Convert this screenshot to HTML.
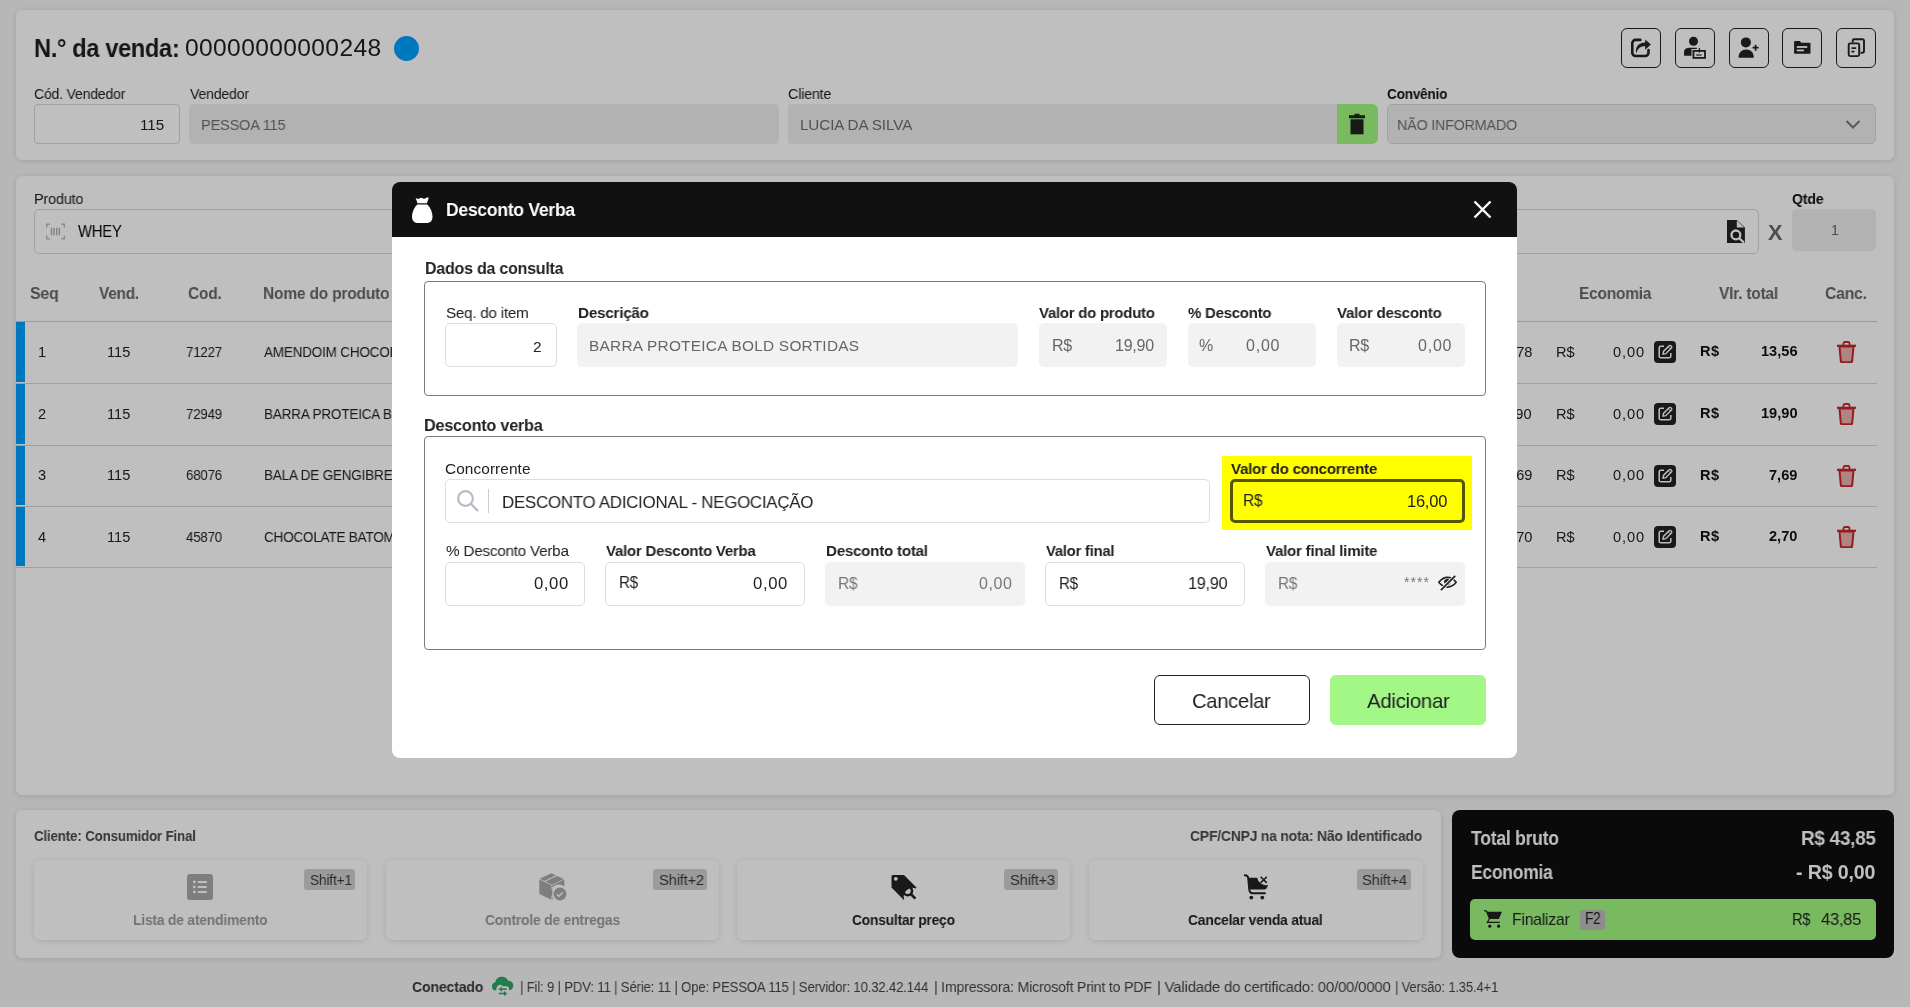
<!DOCTYPE html>
<html><head><meta charset="utf-8"><style>
html,body{margin:0;padding:0;}
body{width:1910px;height:1007px;position:relative;overflow:hidden;background:#f5f5f5;font-family:"Liberation Sans", sans-serif;}
.t{position:absolute;white-space:pre;will-change:transform;}
.r{position:absolute;box-sizing:border-box;}
</style></head><body>
<div class="r" style="left:16px;top:10px;width:1878px;height:150px;background:#fff;border-radius:6px;box-shadow:0 1px 6px rgba(0,0,0,.13)"></div>
<div class="t" style="left:34.00px;top:34.99px;font-size:26px;line-height:26px;font-weight:700;color:#1e1e1e;letter-spacing:-0.390px;transform:scaleX(0.9088);transform-origin:0 0;">N.° da venda:</div>
<div class="t" style="left:185.30px;top:36.48px;font-size:24.6px;line-height:24.6px;color:#1e1e1e;letter-spacing:0.358px;">00000000000248</div>
<div class="r" style="left:394px;top:36px;width:25px;height:25px;background:#00a0ff;border-radius:50%"></div>
<div class="t" style="left:34.20px;top:86.86px;font-size:14.7px;line-height:14.7px;color:#222;letter-spacing:-0.220px;transform:scaleX(0.9586);transform-origin:0 0;">Cód. Vendedor</div>
<div class="t" style="left:189.70px;top:86.86px;font-size:14.7px;line-height:14.7px;color:#222;letter-spacing:-0.220px;transform:scaleX(0.9624);transform-origin:0 0;">Vendedor</div>
<div class="t" style="left:788.40px;top:86.86px;font-size:14.7px;line-height:14.7px;color:#222;letter-spacing:-0.220px;transform:scaleX(0.9769);transform-origin:0 0;">Cliente</div>
<div class="t" style="left:1387.20px;top:86.86px;font-size:14.7px;line-height:14.7px;font-weight:700;color:#111;letter-spacing:-0.220px;transform:scaleX(0.9235);transform-origin:0 0;">Convênio</div>
<div class="r" style="left:34px;top:104px;width:146px;height:40px;background:#fff;border:1px solid #d6d6d6;border-radius:4px"></div>
<div class="t" style="left:140.35px;top:117.13px;font-size:15.2px;line-height:15.2px;color:#222;">115</div>
<div class="r" style="left:189px;top:104px;width:590px;height:40px;background:#eeeeee;border-radius:4px"></div>
<div class="t" style="left:201.30px;top:117.13px;font-size:15.2px;line-height:15.2px;color:#6e6e6e;letter-spacing:-0.228px;transform:scaleX(0.9614);transform-origin:0 0;">PESSOA 115</div>
<div class="r" style="left:788px;top:104px;width:549px;height:40px;background:#eeeeee;border-radius:4px 0 0 4px"></div>
<div class="t" style="left:800.40px;top:117.13px;font-size:15.2px;line-height:15.2px;color:#6e6e6e;letter-spacing:-0.085px;">LUCIA DA SILVA</div>
<div class="r" style="left:1337px;top:104px;width:41px;height:40px;background:#a2f882;border-radius:0 6px 6px 0"></div>
<svg class="r" style="left:1347px;top:112px;" width="20" height="24" viewBox="0 0 20 24"><path d="M7.5 1.8h5v1.5h5.5v2.9H2V3.3h5.5z" fill="#222"/><rect x="3.5" y="7.3" width="13" height="15" fill="#222"/></svg>
<div class="r" style="left:1387px;top:104px;width:489px;height:40px;background:#eeeeee;border:1px solid #d8d8d8;border-radius:5px"></div>
<div class="t" style="left:1396.50px;top:117.13px;font-size:15.2px;line-height:15.2px;color:#6e6e6e;letter-spacing:-0.228px;transform:scaleX(0.9441);transform-origin:0 0;">NÃO INFORMADO</div>
<svg class="r" style="left:1845px;top:119px;" width="16" height="11" viewBox="0 0 16 11"><path d="M1.5 2l6.5 6.5L14.5 2" fill="none" stroke="#777" stroke-width="2"/></svg>
<div class="r" style="left:1621px;top:28px;width:40px;height:40px;border:1.6px solid #222;border-radius:6px"></div>
<div class="r" style="left:1675px;top:28px;width:40px;height:40px;border:1.6px solid #222;border-radius:6px"></div>
<div class="r" style="left:1729px;top:28px;width:40px;height:40px;border:1.6px solid #222;border-radius:6px"></div>
<div class="r" style="left:1782px;top:28px;width:40px;height:40px;border:1.6px solid #222;border-radius:6px"></div>
<div class="r" style="left:1836px;top:28px;width:40px;height:40px;border:1.6px solid #222;border-radius:6px"></div>
<svg class="r" style="left:1621px;top:28px;" width="40" height="40" viewBox="0 0 40 40"><path d="M19.3 11.9H14.6a3.3 3.3 0 0 0-3.3 3.3v9.5a3.3 3.3 0 0 0 3.3 3.3h9.6a3.3 3.3 0 0 0 3.3-3.3V22" fill="none" stroke="#222" stroke-width="2.6" stroke-linecap="round"/><path d="M15.2 25.6C14 19.5 17 14.8 24.2 14.5V11.5L29.9 16.6 24.2 21.7V18.3C19.5 18.1 16.5 20.6 15.2 25.6z" fill="#222"/></svg>
<svg class="r" style="left:1675px;top:28px;" width="40" height="40" viewBox="0 0 40 40"><circle cx="18.5" cy="13.3" r="4.5" fill="#222"/><path d="M9.1 27.8V23.5C9.1 21 11.5 19.7 15 19.7H21.8V21H16.5V27.8z" fill="#222"/><rect x="18.4" y="22.9" width="11.6" height="7" fill="none" stroke="#222" stroke-width="1.8"/><path d="M21.2 27h5.4" stroke="#222" stroke-width="1.2"/><path d="M24.4 20v4.6" stroke="#222" stroke-width="1.3"/></svg>
<svg class="r" style="left:1729px;top:28px;" width="40" height="40" viewBox="0 0 40 40"><circle cx="16.9" cy="14.4" r="5" fill="#222"/><path d="M9.6 29.7C9.6 24.6 12.6 21.6 17.2 21.6S24.8 24.6 24.8 29.7z" fill="#222"/><path d="M26.6 16.7v6M23.6 19.7h6" stroke="#222" stroke-width="1.7"/></svg>
<svg class="r" style="left:1782px;top:28px;" width="40" height="40" viewBox="0 0 40 40"><path d="M12.1 13.8a.8.8 0 0 1 .8-.8h4.9l1.6 1.8h8.3a.8.8 0 0 1 .8.8V25a.8.8 0 0 1-.8.8H12.9a.8.8 0 0 1-.8-.8z" fill="#222"/><rect x="14.8" y="18.1" width="10.5" height="1.8" fill="#fff"/><rect x="14.8" y="21.5" width="7.1" height="1.8" fill="#fff"/></svg>
<svg class="r" style="left:1836px;top:28px;" width="40" height="40" viewBox="0 0 40 40"><path d="M16.7 14.5v-1.7a1.5 1.5 0 0 1 1.5-1.5h8.3a1.5 1.5 0 0 1 1.5 1.5v10.5a1.5 1.5 0 0 1-1.5 1.5h-1.9" fill="none" stroke="#222" stroke-width="1.9"/><rect x="12.7" y="15.4" width="10.5" height="12.7" rx="1.5" fill="none" stroke="#222" stroke-width="1.9"/><rect x="15.3" y="19.2" width="5.1" height="1.7" rx=".8" fill="#222"/><rect x="15.3" y="22.8" width="3.2" height="1.7" rx=".8" fill="#222"/></svg>
<div class="r" style="left:16px;top:176px;width:1878px;height:619px;background:#fff;border-radius:6px;box-shadow:0 1px 6px rgba(0,0,0,.13)"></div>
<div class="t" style="left:34.20px;top:191.56px;font-size:14.7px;line-height:14.7px;color:#222;letter-spacing:-0.220px;transform:scaleX(0.9865);transform-origin:0 0;">Produto</div>
<div class="r" style="left:34px;top:209px;width:1725px;height:45px;background:#fff;border:1px solid #d6d6d6;border-radius:5px"></div>
<svg class="r" style="left:45px;top:223px;" width="21" height="17" viewBox="0 0 21 18"><path d="M4.5 1.2H1.2v3.6M16.5 1.2h3.3v3.6M1.2 13.2v3.6h3.3M19.8 13.2v3.6h-3.3" fill="none" stroke="#a9b0b8" stroke-width="1.3"/><path d="M6.3 5v8M9 5v8M11.8 5v8M14.6 5v8" stroke="#a9b0b8" stroke-width="1.5"/></svg>
<div class="t" style="left:77.50px;top:223.99px;font-size:15.6px;line-height:15.6px;color:#000;letter-spacing:-0.234px;transform:scaleX(0.9501);transform-origin:0 0;">WHEY</div>
<svg class="r" style="left:1726px;top:219px;" width="20" height="25" viewBox="0 0 20 25"><path d="M1 1h9.8L18.9 8.4V24H1z" fill="#222"/><path d="M10.8 1.6v6.9h7.4z" fill="#fff"/><circle cx="9.9" cy="15.9" r="4.4" fill="none" stroke="#fff" stroke-width="2.3"/><path d="M13 19l5 4.6" stroke="#fff" stroke-width="2.3"/></svg>
<div class="t" style="left:1768.20px;top:222.43px;font-size:21.7px;line-height:21.7px;font-weight:700;color:#6a6a6a;">X</div>
<div class="t" style="left:1791.50px;top:191.56px;font-size:14.7px;line-height:14.7px;font-weight:700;color:#111;letter-spacing:-0.220px;transform:scaleX(0.9592);transform-origin:0 0;">Qtde</div>
<div class="r" style="left:1792px;top:209px;width:84px;height:42px;background:#eeeeee;border-radius:5px"></div>
<div class="t" style="left:1831.05px;top:223.48px;font-size:14.2px;line-height:14.2px;color:#666;">1</div>
<div class="t" style="left:30.20px;top:285.01px;font-size:17px;line-height:17px;font-weight:700;color:#666;letter-spacing:-0.255px;transform:scaleX(0.9384);transform-origin:0 0;">Seq</div>
<div class="t" style="left:98.80px;top:285.01px;font-size:17px;line-height:17px;font-weight:700;color:#666;letter-spacing:-0.255px;transform:scaleX(0.9068);transform-origin:0 0;">Vend.</div>
<div class="t" style="left:187.50px;top:285.01px;font-size:17px;line-height:17px;font-weight:700;color:#666;letter-spacing:-0.255px;transform:scaleX(0.9112);transform-origin:0 0;">Cod.</div>
<div class="t" style="left:263.00px;top:285.01px;font-size:17px;line-height:17px;font-weight:700;color:#666;letter-spacing:-0.255px;transform:scaleX(0.9161);transform-origin:0 0;">Nome do produto</div>
<div class="t" style="left:1579.40px;top:285.01px;font-size:17px;line-height:17px;font-weight:700;color:#666;letter-spacing:-0.255px;transform:scaleX(0.9119);transform-origin:0 0;">Economia</div>
<div class="t" style="left:1719.00px;top:285.01px;font-size:17px;line-height:17px;font-weight:700;color:#666;letter-spacing:-0.255px;transform:scaleX(0.9142);transform-origin:0 0;">Vlr. total</div>
<div class="t" style="left:1825.00px;top:285.01px;font-size:17px;line-height:17px;font-weight:700;color:#666;letter-spacing:-0.255px;transform:scaleX(0.9276);transform-origin:0 0;">Canc.</div>
<div class="r" style="left:16px;top:321px;width:1861px;height:1px;background:#cfcfcf"></div>
<div class="r" style="left:16px;top:322px;width:9px;height:60px;background:#00a0ff"></div>
<div class="r" style="left:16px;top:383px;width:1861px;height:1px;background:#d4d4d4"></div>
<div class="t" style="left:37.75px;top:344.84px;font-size:14.6px;line-height:14.6px;color:#222;">1</div>
<div class="t" style="left:107.35px;top:344.84px;font-size:14.6px;line-height:14.6px;color:#222;">115</div>
<div class="t" style="left:186.40px;top:344.84px;font-size:14.6px;line-height:14.6px;color:#222;letter-spacing:-0.219px;transform:scaleX(0.9113);transform-origin:0 0;">71227</div>
<div class="t" style="left:263.60px;top:344.84px;font-size:14.6px;line-height:14.6px;color:#222;letter-spacing:-0.219px;transform:scaleX(0.9263);transform-origin:0 0;">AMENDOIM CHOCOLATE</div>
<div class="t" style="left:1503.60px;top:344.84px;font-size:14.6px;line-height:14.6px;color:#222;">6,78</div>
<div class="t" style="left:1555.50px;top:344.84px;font-size:14.6px;line-height:14.6px;color:#222;letter-spacing:-0.150px;">R$</div>
<div class="t" style="left:1612.80px;top:344.84px;font-size:14.6px;line-height:14.6px;color:#222;letter-spacing:0.867px;">0,00</div>
<div class="r" style="left:1654px;top:341px;width:22px;height:22px;background:#222;border-radius:4px"></div>
<svg class="r" style="left:1654px;top:341px;" width="22" height="22" viewBox="0 0 22 22"><path d="M10 5.2H6.8A1.6 1.6 0 0 0 5.2 6.8v8.4a1.6 1.6 0 0 0 1.6 1.6h8.4a1.6 1.6 0 0 0 1.6-1.6V12" fill="none" stroke="#fff" stroke-width="1.5"/><path d="M9 13.2l.5-2.8 5.6-5.6a1.3 1.3 0 0 1 1.9 0l.4.4a1.3 1.3 0 0 1 0 1.9L11.8 12.7z" fill="none" stroke="#fff" stroke-width="1.4"/><path d="M14.3 5.8l2.1 2.1" stroke="#fff" stroke-width="1"/></svg>
<div class="t" style="left:1699.90px;top:344.14px;font-size:14.6px;line-height:14.6px;font-weight:700;color:#111;letter-spacing:0.350px;">R$</div>
<div class="t" style="left:1760.65px;top:344.14px;font-size:14.6px;line-height:14.6px;font-weight:700;color:#111;">13,56</div>
<svg class="r" style="left:1836px;top:341px;" width="21" height="22" viewBox="0 0 21 22"><path d="M3.5 5.5h14l-1.3 14.5a1.5 1.5 0 0 1-1.5 1.3H6.3a1.5 1.5 0 0 1-1.5-1.3z" fill="#e8b0b0" stroke="#c62828" stroke-width="2"/><path d="M1 4.8h19" stroke="#c62828" stroke-width="2.2"/><path d="M7.5 4.5V2.5a1.5 1.5 0 0 1 1.5-1.5h3a1.5 1.5 0 0 1 1.5 1.5v2" fill="none" stroke="#c62828" stroke-width="1.8"/></svg>
<div class="r" style="left:16px;top:384px;width:9px;height:60px;background:#00a0ff"></div>
<div class="r" style="left:16px;top:445px;width:1861px;height:1px;background:#d4d4d4"></div>
<div class="t" style="left:37.75px;top:406.54px;font-size:14.6px;line-height:14.6px;color:#222;">2</div>
<div class="t" style="left:107.35px;top:406.54px;font-size:14.6px;line-height:14.6px;color:#222;">115</div>
<div class="t" style="left:186.40px;top:406.54px;font-size:14.6px;line-height:14.6px;color:#222;letter-spacing:-0.219px;transform:scaleX(0.9113);transform-origin:0 0;">72949</div>
<div class="t" style="left:263.60px;top:406.54px;font-size:14.6px;line-height:14.6px;color:#222;letter-spacing:-0.219px;transform:scaleX(0.9285);transform-origin:0 0;">BARRA PROTEICA BOLD SORTIDAS</div>
<div class="t" style="left:1495.45px;top:406.54px;font-size:14.6px;line-height:14.6px;color:#222;">19,90</div>
<div class="t" style="left:1555.50px;top:406.54px;font-size:14.6px;line-height:14.6px;color:#222;letter-spacing:-0.150px;">R$</div>
<div class="t" style="left:1612.80px;top:406.54px;font-size:14.6px;line-height:14.6px;color:#222;letter-spacing:0.867px;">0,00</div>
<div class="r" style="left:1654px;top:403px;width:22px;height:22px;background:#222;border-radius:4px"></div>
<svg class="r" style="left:1654px;top:403px;" width="22" height="22" viewBox="0 0 22 22"><path d="M10 5.2H6.8A1.6 1.6 0 0 0 5.2 6.8v8.4a1.6 1.6 0 0 0 1.6 1.6h8.4a1.6 1.6 0 0 0 1.6-1.6V12" fill="none" stroke="#fff" stroke-width="1.5"/><path d="M9 13.2l.5-2.8 5.6-5.6a1.3 1.3 0 0 1 1.9 0l.4.4a1.3 1.3 0 0 1 0 1.9L11.8 12.7z" fill="none" stroke="#fff" stroke-width="1.4"/><path d="M14.3 5.8l2.1 2.1" stroke="#fff" stroke-width="1"/></svg>
<div class="t" style="left:1699.90px;top:405.84px;font-size:14.6px;line-height:14.6px;font-weight:700;color:#111;letter-spacing:0.350px;">R$</div>
<div class="t" style="left:1760.65px;top:405.84px;font-size:14.6px;line-height:14.6px;font-weight:700;color:#111;">19,90</div>
<svg class="r" style="left:1836px;top:403px;" width="21" height="22" viewBox="0 0 21 22"><path d="M3.5 5.5h14l-1.3 14.5a1.5 1.5 0 0 1-1.5 1.3H6.3a1.5 1.5 0 0 1-1.5-1.3z" fill="#e8b0b0" stroke="#c62828" stroke-width="2"/><path d="M1 4.8h19" stroke="#c62828" stroke-width="2.2"/><path d="M7.5 4.5V2.5a1.5 1.5 0 0 1 1.5-1.5h3a1.5 1.5 0 0 1 1.5 1.5v2" fill="none" stroke="#c62828" stroke-width="1.8"/></svg>
<div class="r" style="left:16px;top:446px;width:9px;height:59px;background:#00a0ff"></div>
<div class="r" style="left:16px;top:506px;width:1861px;height:1px;background:#d4d4d4"></div>
<div class="t" style="left:37.75px;top:468.24px;font-size:14.6px;line-height:14.6px;color:#222;">3</div>
<div class="t" style="left:107.35px;top:468.24px;font-size:14.6px;line-height:14.6px;color:#222;">115</div>
<div class="t" style="left:186.40px;top:468.24px;font-size:14.6px;line-height:14.6px;color:#222;letter-spacing:-0.219px;transform:scaleX(0.9113);transform-origin:0 0;">68076</div>
<div class="t" style="left:263.60px;top:468.24px;font-size:14.6px;line-height:14.6px;color:#222;letter-spacing:-0.219px;transform:scaleX(0.9280);transform-origin:0 0;">BALA DE GENGIBRE</div>
<div class="t" style="left:1503.60px;top:468.24px;font-size:14.6px;line-height:14.6px;color:#222;">7,69</div>
<div class="t" style="left:1555.50px;top:468.24px;font-size:14.6px;line-height:14.6px;color:#222;letter-spacing:-0.150px;">R$</div>
<div class="t" style="left:1612.80px;top:468.24px;font-size:14.6px;line-height:14.6px;color:#222;letter-spacing:0.867px;">0,00</div>
<div class="r" style="left:1654px;top:465px;width:22px;height:22px;background:#222;border-radius:4px"></div>
<svg class="r" style="left:1654px;top:465px;" width="22" height="22" viewBox="0 0 22 22"><path d="M10 5.2H6.8A1.6 1.6 0 0 0 5.2 6.8v8.4a1.6 1.6 0 0 0 1.6 1.6h8.4a1.6 1.6 0 0 0 1.6-1.6V12" fill="none" stroke="#fff" stroke-width="1.5"/><path d="M9 13.2l.5-2.8 5.6-5.6a1.3 1.3 0 0 1 1.9 0l.4.4a1.3 1.3 0 0 1 0 1.9L11.8 12.7z" fill="none" stroke="#fff" stroke-width="1.4"/><path d="M14.3 5.8l2.1 2.1" stroke="#fff" stroke-width="1"/></svg>
<div class="t" style="left:1699.90px;top:467.54px;font-size:14.6px;line-height:14.6px;font-weight:700;color:#111;letter-spacing:0.350px;">R$</div>
<div class="t" style="left:1768.80px;top:467.54px;font-size:14.6px;line-height:14.6px;font-weight:700;color:#111;">7,69</div>
<svg class="r" style="left:1836px;top:465px;" width="21" height="22" viewBox="0 0 21 22"><path d="M3.5 5.5h14l-1.3 14.5a1.5 1.5 0 0 1-1.5 1.3H6.3a1.5 1.5 0 0 1-1.5-1.3z" fill="#e8b0b0" stroke="#c62828" stroke-width="2"/><path d="M1 4.8h19" stroke="#c62828" stroke-width="2.2"/><path d="M7.5 4.5V2.5a1.5 1.5 0 0 1 1.5-1.5h3a1.5 1.5 0 0 1 1.5 1.5v2" fill="none" stroke="#c62828" stroke-width="1.8"/></svg>
<div class="r" style="left:16px;top:507px;width:9px;height:59px;background:#00a0ff"></div>
<div class="r" style="left:16px;top:567px;width:1861px;height:1px;background:#d4d4d4"></div>
<div class="t" style="left:37.75px;top:529.94px;font-size:14.6px;line-height:14.6px;color:#222;">4</div>
<div class="t" style="left:107.35px;top:529.94px;font-size:14.6px;line-height:14.6px;color:#222;">115</div>
<div class="t" style="left:186.40px;top:529.94px;font-size:14.6px;line-height:14.6px;color:#222;letter-spacing:-0.219px;transform:scaleX(0.9113);transform-origin:0 0;">45870</div>
<div class="t" style="left:263.60px;top:529.94px;font-size:14.6px;line-height:14.6px;color:#222;letter-spacing:-0.219px;transform:scaleX(0.9262);transform-origin:0 0;">CHOCOLATE BATOM</div>
<div class="t" style="left:1503.60px;top:529.94px;font-size:14.6px;line-height:14.6px;color:#222;">2,70</div>
<div class="t" style="left:1555.50px;top:529.94px;font-size:14.6px;line-height:14.6px;color:#222;letter-spacing:-0.150px;">R$</div>
<div class="t" style="left:1612.80px;top:529.94px;font-size:14.6px;line-height:14.6px;color:#222;letter-spacing:0.867px;">0,00</div>
<div class="r" style="left:1654px;top:526px;width:22px;height:22px;background:#222;border-radius:4px"></div>
<svg class="r" style="left:1654px;top:526px;" width="22" height="22" viewBox="0 0 22 22"><path d="M10 5.2H6.8A1.6 1.6 0 0 0 5.2 6.8v8.4a1.6 1.6 0 0 0 1.6 1.6h8.4a1.6 1.6 0 0 0 1.6-1.6V12" fill="none" stroke="#fff" stroke-width="1.5"/><path d="M9 13.2l.5-2.8 5.6-5.6a1.3 1.3 0 0 1 1.9 0l.4.4a1.3 1.3 0 0 1 0 1.9L11.8 12.7z" fill="none" stroke="#fff" stroke-width="1.4"/><path d="M14.3 5.8l2.1 2.1" stroke="#fff" stroke-width="1"/></svg>
<div class="t" style="left:1699.90px;top:529.24px;font-size:14.6px;line-height:14.6px;font-weight:700;color:#111;letter-spacing:0.350px;">R$</div>
<div class="t" style="left:1768.80px;top:529.24px;font-size:14.6px;line-height:14.6px;font-weight:700;color:#111;">2,70</div>
<svg class="r" style="left:1836px;top:526px;" width="21" height="22" viewBox="0 0 21 22"><path d="M3.5 5.5h14l-1.3 14.5a1.5 1.5 0 0 1-1.5 1.3H6.3a1.5 1.5 0 0 1-1.5-1.3z" fill="#e8b0b0" stroke="#c62828" stroke-width="2"/><path d="M1 4.8h19" stroke="#c62828" stroke-width="2.2"/><path d="M7.5 4.5V2.5a1.5 1.5 0 0 1 1.5-1.5h3a1.5 1.5 0 0 1 1.5 1.5v2" fill="none" stroke="#c62828" stroke-width="1.8"/></svg>
<div class="r" style="left:16px;top:810px;width:1424.6px;height:148px;background:#fff;border-radius:6px;box-shadow:0 1px 6px rgba(0,0,0,.13)"></div>
<div class="t" style="left:34.00px;top:828.30px;font-size:15px;line-height:15px;font-weight:700;color:#4a4a4a;letter-spacing:-0.225px;transform:scaleX(0.8938);transform-origin:0 0;">Cliente: Consumidor Final</div>
<div class="t" style="left:1190.30px;top:828.30px;font-size:15px;line-height:15px;font-weight:700;color:#4a4a4a;letter-spacing:-0.225px;transform:scaleX(0.9285);transform-origin:0 0;">CPF/CNPJ na nota: Não Identificado</div>
<div class="r" style="left:34px;top:860px;width:333px;height:80px;background:#fff;border-radius:6px;box-shadow:0 1px 6px rgba(0,0,0,.12)"></div>
<div class="t" style="left:133.20px;top:912.30px;font-size:15px;line-height:15px;font-weight:700;color:#9a9a9a;letter-spacing:-0.225px;transform:scaleX(0.9243);transform-origin:0 0;">Lista de atendimento</div>
<div class="r" style="left:304.2px;top:869px;width:51px;height:21px;background:#cfcfcf;border-radius:3px"></div>
<div class="t" style="left:309.50px;top:872.30px;font-size:15px;line-height:15px;color:#3a3a3a;letter-spacing:-0.225px;transform:scaleX(0.9180);transform-origin:0 0;">Shift+1</div>
<div class="r" style="left:386px;top:860px;width:333px;height:80px;background:#fff;border-radius:6px;box-shadow:0 1px 6px rgba(0,0,0,.12)"></div>
<div class="t" style="left:484.60px;top:912.30px;font-size:15px;line-height:15px;font-weight:700;color:#9a9a9a;letter-spacing:-0.225px;transform:scaleX(0.9275);transform-origin:0 0;">Controle de entregas</div>
<div class="r" style="left:653.2px;top:869px;width:54px;height:21px;background:#cfcfcf;border-radius:3px"></div>
<div class="t" style="left:658.50px;top:872.30px;font-size:15px;line-height:15px;color:#3a3a3a;letter-spacing:-0.225px;transform:scaleX(0.9836);transform-origin:0 0;">Shift+2</div>
<div class="r" style="left:737px;top:860px;width:333px;height:80px;background:#fff;border-radius:6px;box-shadow:0 1px 6px rgba(0,0,0,.12)"></div>
<div class="t" style="left:852.00px;top:912.30px;font-size:15px;line-height:15px;font-weight:700;color:#222;letter-spacing:-0.225px;transform:scaleX(0.9209);transform-origin:0 0;">Consultar preço</div>
<div class="r" style="left:1004.2px;top:869px;width:54px;height:21px;background:#cfcfcf;border-radius:3px"></div>
<div class="t" style="left:1009.50px;top:872.30px;font-size:15px;line-height:15px;color:#3a3a3a;letter-spacing:-0.225px;transform:scaleX(0.9836);transform-origin:0 0;">Shift+3</div>
<div class="r" style="left:1089px;top:860px;width:333.5px;height:80px;background:#fff;border-radius:6px;box-shadow:0 1px 6px rgba(0,0,0,.12)"></div>
<div class="t" style="left:1188.20px;top:912.30px;font-size:15px;line-height:15px;font-weight:700;color:#222;letter-spacing:-0.225px;transform:scaleX(0.9247);transform-origin:0 0;">Cancelar venda atual</div>
<div class="r" style="left:1356.7px;top:869px;width:54px;height:21px;background:#cfcfcf;border-radius:3px"></div>
<div class="t" style="left:1362.00px;top:872.30px;font-size:15px;line-height:15px;color:#3a3a3a;letter-spacing:-0.225px;transform:scaleX(0.9836);transform-origin:0 0;">Shift+4</div>
<svg class="r" style="left:187px;top:874px;" width="26" height="26" viewBox="0 0 26 26"><rect x="0" y="0" width="26" height="26" rx="3" fill="#a8a8a8"/><circle cx="7.3" cy="8" r="1.4" fill="#fff"/><circle cx="7.3" cy="13" r="1.4" fill="#fff"/><circle cx="7.3" cy="18" r="1.4" fill="#fff"/><rect x="10.5" y="7" width="9.5" height="2" rx="1" fill="#fff"/><rect x="10.5" y="12" width="9.5" height="2" rx="1" fill="#fff"/><rect x="10.5" y="17" width="9.5" height="2" rx="1" fill="#fff"/></svg>
<svg class="r" style="left:538.5px;top:872.5px;" width="28" height="28" viewBox="0 0 28 28"><path d="M0.3 6.5L12.5 12.3V26.8L0.3 21z" fill="#a8a8a8"/><path d="M13.3 12.3L25.3 6.5V13.5A7.5 7.5 0 0 0 14.5 25.8L13.3 26.6z" fill="#a8a8a8"/><path d="M0.8 5.8L12.5 0.3 16.8 2.3 5.2 7.9z" fill="#a8a8a8"/><path d="M6.4 8.5L18 2.9 24.8 6.1 12.9 11.7z" fill="#a8a8a8"/><circle cx="21" cy="21" r="6.4" fill="#a8a8a8"/><path d="M17.9 21.2l2.1 2.1 4-4" fill="none" stroke="#fff" stroke-width="1.5"/></svg>
<svg class="r" style="left:891px;top:874px;" width="27" height="27" viewBox="0 0 27 27"><path d="M0.5 2.5a1.5 1.5 0 0 1 1.5-1.5H13L25.5 13.5 24.6 14.4A9 9 0 0 0 13.2 25.8L12.9 26 0.5 13.6z" fill="#222"/><circle cx="4.8" cy="4.8" r="1.9" fill="#fff"/><circle cx="16.7" cy="16.9" r="4.3" fill="none" stroke="#222" stroke-width="2.6"/><path d="M19.8 20l4.6 4.6" stroke="#222" stroke-width="2.6"/></svg>
<svg class="r" style="left:1243.5px;top:874.3px;" width="25" height="26" viewBox="0 0 25 26"><path d="M0.5 1.2C2.5 1.2 3.9 2 4.1 3.5L5.3 15.8C5.5 18 6.8 19.2 8.9 19.2H21" fill="none" stroke="#222" stroke-width="1.9" stroke-linecap="round"/><path d="M4.2 3.8H13.1A9 9 0 0 0 24.2 10.9L22.7 14C22.2 15 21.5 15.4 20.5 15.4H5.8z" fill="#222"/><circle cx="7.3" cy="23.6" r="1.9" fill="#222"/><circle cx="18.3" cy="23.6" r="1.9" fill="#222"/><path d="M16.6 2.7l6.2 6.2M22.8 2.7l-6.2 6.2" stroke="#222" stroke-width="1.5"/></svg>
<div class="r" style="left:1452px;top:810px;width:442px;height:148px;background:#0e0e0e;border-radius:8px"></div>
<div class="t" style="left:1470.80px;top:828.91px;font-size:19.6px;line-height:19.6px;font-weight:700;color:#fff;letter-spacing:-0.294px;transform:scaleX(0.8983);transform-origin:0 0;">Total bruto</div>
<div class="t" style="left:1800.50px;top:828.91px;font-size:19.6px;line-height:19.6px;font-weight:700;color:#fff;letter-spacing:-0.294px;transform:scaleX(0.9678);transform-origin:0 0;">R$ 43,85</div>
<div class="t" style="left:1470.80px;top:862.61px;font-size:19.6px;line-height:19.6px;font-weight:700;color:#fff;letter-spacing:-0.294px;transform:scaleX(0.8927);transform-origin:0 0;">Economia</div>
<div class="t" style="left:1796.00px;top:862.61px;font-size:19.6px;line-height:19.6px;font-weight:700;color:#fff;letter-spacing:-0.137px;">- R$ 0,00</div>
<div class="r" style="left:1470px;top:899px;width:406px;height:41px;background:#a2f882;border-radius:5px"></div>
<svg class="r" style="left:1484px;top:910px;" width="19" height="18" viewBox="0 0 19 18"><path d="M0 0.2H2.6L3.6 1.8H18L14.8 9.1H5.9L4.4 11.7H15.8V13.1H2.3L4.8 8.4 1.9 1.6H0z" fill="#222"/><circle cx="5.8" cy="16.2" r="1.6" fill="#222"/><circle cx="14.6" cy="16.2" r="1.6" fill="#222"/></svg>
<div class="t" style="left:1512.10px;top:910.61px;font-size:17px;line-height:17px;color:#222;letter-spacing:-0.255px;transform:scaleX(0.9291);transform-origin:0 0;">Finalizar</div>
<div class="r" style="left:1580px;top:909.5px;width:25px;height:20px;background:#bdbdbd;border-radius:3px"></div>
<div class="t" style="left:1584.70px;top:911.46px;font-size:16px;line-height:16px;color:#222;letter-spacing:-0.240px;transform:scaleX(0.8528);transform-origin:0 0;">F2</div>
<div class="t" style="left:1792.40px;top:910.61px;font-size:17px;line-height:17px;color:#222;letter-spacing:-0.255px;transform:scaleX(0.8653);transform-origin:0 0;">R$</div>
<div class="t" style="left:1821.40px;top:910.61px;font-size:17px;line-height:17px;color:#222;letter-spacing:-0.255px;transform:scaleX(0.9728);transform-origin:0 0;">43,85</div>
<div class="t" style="left:411.70px;top:979.18px;font-size:15.5px;line-height:15.5px;font-weight:700;color:#3a3a3a;letter-spacing:-0.232px;transform:scaleX(0.9126);transform-origin:0 0;">Conectado</div>
<div class="t" style="left:520.30px;top:979.18px;font-size:15.5px;line-height:15.5px;color:#444;letter-spacing:-0.232px;transform:scaleX(0.8519);transform-origin:0 0;">| Fil: 9 | PDV: 11 | Série: 11 | Ope: PESSOA 115 | Servidor: 10.32.42.144</div>
<div class="t" style="left:933.70px;top:979.18px;font-size:15.5px;line-height:15.5px;color:#444;letter-spacing:-0.232px;transform:scaleX(0.9159);transform-origin:0 0;">| Impressora: Microsoft Print to PDF</div>
<div class="t" style="left:1156.80px;top:979.18px;font-size:15.5px;line-height:15.5px;color:#444;letter-spacing:-0.232px;transform:scaleX(0.9668);transform-origin:0 0;">| Validade do certificado: 00/00/0000</div>
<div class="t" style="left:1395.00px;top:979.18px;font-size:15.5px;line-height:15.5px;color:#444;letter-spacing:-0.232px;transform:scaleX(0.8467);transform-origin:0 0;">| Versão: 1.35.4+1</div>
<svg class="r" style="left:492px;top:976px;" width="22" height="20" viewBox="0 0 22 20"><path d="M4 14.5A4.2 4.2 0 0 1 3.2 6.2 6.8 6.8 0 0 1 16.1 4.8 4.8 4.8 0 0 1 17.4 14.3L17 14.2V12.5A2.3 2.3 0 0 0 14.7 10.2H11A3.5 3.5 0 0 0 4.7 11.6z" fill="#2ca866"/><path d="M14.8 13.2H7.8" stroke="#2ca866" stroke-width="1.6"/><path d="M9.8 10.6L6.6 13.2 9.8 15.8z" fill="#2ca866"/><path d="M6.8 17.5h7" stroke="#2ca866" stroke-width="1.6"/><path d="M12 14.9l3.2 2.6-3.2 2.6z" fill="#2ca866"/></svg>
<div class="r" style="left:0px;top:0px;width:1910px;height:1007px;background:rgba(0,0,0,0.25)"></div>
<div class="r" style="left:392px;top:182px;width:1125px;height:576px;background:#fff;border-radius:8px;overflow:hidden"></div>
<div class="r" style="left:392px;top:182px;width:1125px;height:55px;background:#111;border-radius:8px 8px 0 0"></div>
<svg class="r" style="left:412px;top:196.5px;" width="21" height="27" viewBox="0 0 21 27"><path d="M3.6 0.8Q5.5 2.6 7.4 1.4 8.8 0.2 10.2 0.9 11.6 2.2 13 1.4 14.9 0.2 16.8 0.8L14.9 6.2H5.5z" fill="#fff"/><path d="M5.2 7.5H15.3C18.3 10.5 20.5 15 20.5 19.5 20.5 24 18 26 14.5 26H6C2.5 26 0 24 0 19.5 0 15 2.2 10.5 5.2 7.5z" fill="#fff"/></svg>
<div class="t" style="left:445.50px;top:200.89px;font-size:18.8px;line-height:18.8px;font-weight:700;color:#fff;letter-spacing:-0.282px;transform:scaleX(0.9337);transform-origin:0 0;">Desconto Verba</div>
<svg class="r" style="left:1473px;top:200px;" width="19" height="19" viewBox="0 0 19 19"><path d="M1.5 1.5l16 16M17.5 1.5l-16 16" stroke="#fff" stroke-width="2.4"/></svg>
<div class="t" style="left:424.60px;top:260.47px;font-size:17.4px;line-height:17.4px;font-weight:700;color:#222;letter-spacing:-0.261px;transform:scaleX(0.9208);transform-origin:0 0;">Dados da consulta</div>
<div class="r" style="left:424px;top:280.5px;width:1062px;height:115.5px;border:1.4px solid #7a7a7a;border-radius:4px"></div>
<div class="t" style="left:445.60px;top:305.26px;font-size:15.4px;line-height:15.4px;color:#222;letter-spacing:-0.231px;transform:scaleX(0.9868);transform-origin:0 0;">Seq. do item</div>
<div class="t" style="left:578.30px;top:305.26px;font-size:15.4px;line-height:15.4px;font-weight:700;color:#222;letter-spacing:-0.231px;transform:scaleX(0.9895);transform-origin:0 0;">Descrição</div>
<div class="t" style="left:1039.40px;top:305.06px;font-size:15.4px;line-height:15.4px;font-weight:700;color:#222;letter-spacing:-0.231px;transform:scaleX(0.9688);transform-origin:0 0;">Valor do produto</div>
<div class="t" style="left:1187.90px;top:305.06px;font-size:15.4px;line-height:15.4px;font-weight:700;color:#222;letter-spacing:-0.231px;transform:scaleX(0.9713);transform-origin:0 0;">% Desconto</div>
<div class="t" style="left:1336.80px;top:305.06px;font-size:15.4px;line-height:15.4px;font-weight:700;color:#222;letter-spacing:-0.231px;transform:scaleX(0.9758);transform-origin:0 0;">Valor desconto</div>
<div class="r" style="left:445px;top:323px;width:112px;height:44px;border:1.3px solid #dedede;border-radius:5px"></div>
<div class="t" style="left:533.20px;top:339.26px;font-size:15.4px;line-height:15.4px;color:#222;">2</div>
<div class="r" style="left:577px;top:323px;width:441px;height:44px;background:#f2f2f2;border-radius:5px"></div>
<div class="t" style="left:589.30px;top:338.26px;font-size:15.4px;line-height:15.4px;color:#666;letter-spacing:0.256px;">BARRA PROTEICA BOLD SORTIDAS</div>
<div class="r" style="left:1039px;top:323px;width:128px;height:44px;background:#f2f2f2;border-radius:5px"></div>
<div class="r" style="left:1188px;top:323px;width:128px;height:44px;background:#f2f2f2;border-radius:5px"></div>
<div class="r" style="left:1337px;top:323px;width:128px;height:44px;background:#f2f2f2;border-radius:5px"></div>
<div class="t" style="left:1051.70px;top:338.06px;font-size:16px;line-height:16px;color:#666;letter-spacing:-0.240px;transform:scaleX(0.9896);transform-origin:0 0;">R$</div>
<div class="t" style="left:1115.30px;top:338.06px;font-size:16px;line-height:16px;color:#666;letter-spacing:-0.240px;transform:scaleX(0.9951);transform-origin:0 0;">19,90</div>
<div class="t" style="left:1199.20px;top:338.06px;font-size:16px;line-height:16px;color:#666;">%</div>
<div class="t" style="left:1245.60px;top:338.06px;font-size:16px;line-height:16px;color:#666;letter-spacing:0.783px;">0,00</div>
<div class="t" style="left:1349.30px;top:338.06px;font-size:16px;line-height:16px;color:#666;letter-spacing:-0.240px;transform:scaleX(0.9896);transform-origin:0 0;">R$</div>
<div class="t" style="left:1418.30px;top:338.06px;font-size:16px;line-height:16px;color:#666;letter-spacing:0.783px;">0,00</div>
<div class="t" style="left:424.30px;top:416.67px;font-size:17.4px;line-height:17.4px;font-weight:700;color:#222;letter-spacing:-0.261px;transform:scaleX(0.9343);transform-origin:0 0;">Desconto verba</div>
<div class="r" style="left:424px;top:436px;width:1062px;height:214px;border:1.4px solid #7a7a7a;border-radius:4px"></div>
<div class="t" style="left:445.30px;top:461.06px;font-size:15.4px;line-height:15.4px;color:#222;letter-spacing:0.085px;">Concorrente</div>
<div class="r" style="left:445px;top:479px;width:765px;height:44px;border:1.3px solid #dedede;border-radius:5px"></div>
<svg class="r" style="left:456px;top:489px;" width="25" height="25" viewBox="0 0 25 25"><circle cx="9.5" cy="9.5" r="7.3" fill="none" stroke="#b7bcc2" stroke-width="2.2"/><path d="M15 15l7 7" stroke="#b7bcc2" stroke-width="2.4"/></svg>
<div class="r" style="left:487.5px;top:489px;width:1.5px;height:24px;background:#c8cdd2"></div>
<div class="t" style="left:501.60px;top:493.81px;font-size:17px;line-height:17px;color:#222;letter-spacing:-0.255px;transform:scaleX(0.9933);transform-origin:0 0;">DESCONTO ADICIONAL - NEGOCIAÇÃO</div>
<div class="r" style="left:1222px;top:456px;width:250px;height:74px;background:#ffff00"></div>
<div class="t" style="left:1230.60px;top:461.46px;font-size:15.4px;line-height:15.4px;font-weight:700;color:#222;letter-spacing:-0.231px;transform:scaleX(0.9782);transform-origin:0 0;">Valor do concorrente</div>
<div class="r" style="left:1230px;top:479px;width:235px;height:44px;border:3px solid #555500;border-radius:5px;background:#ffff00"></div>
<div class="t" style="left:1243.10px;top:493.16px;font-size:16px;line-height:16px;color:#222;letter-spacing:-0.240px;transform:scaleX(0.9698);transform-origin:0 0;">R$</div>
<div class="t" style="left:1407.00px;top:493.03px;font-size:16.5px;line-height:16.5px;color:#222;letter-spacing:-0.247px;transform:scaleX(0.9998);transform-origin:0 0;">16,00</div>
<div class="t" style="left:445.70px;top:542.86px;font-size:15.4px;line-height:15.4px;color:#222;letter-spacing:-0.231px;transform:scaleX(0.9917);transform-origin:0 0;">% Desconto Verba</div>
<div class="t" style="left:605.90px;top:542.86px;font-size:15.4px;line-height:15.4px;font-weight:700;color:#222;letter-spacing:-0.231px;transform:scaleX(0.9740);transform-origin:0 0;">Valor Desconto Verba</div>
<div class="t" style="left:825.80px;top:543.16px;font-size:15.4px;line-height:15.4px;font-weight:700;color:#222;letter-spacing:-0.231px;transform:scaleX(0.9822);transform-origin:0 0;">Desconto total</div>
<div class="t" style="left:1046.00px;top:543.16px;font-size:15.4px;line-height:15.4px;font-weight:700;color:#222;letter-spacing:-0.231px;transform:scaleX(0.9609);transform-origin:0 0;">Valor final</div>
<div class="t" style="left:1265.50px;top:543.16px;font-size:15.4px;line-height:15.4px;font-weight:700;color:#222;letter-spacing:-0.231px;transform:scaleX(0.9766);transform-origin:0 0;">Valor final limite</div>
<div class="r" style="left:445px;top:562px;width:140px;height:44px;border:1.3px solid #dedede;border-radius:5px"></div>
<div class="t" style="left:534.00px;top:575.96px;font-size:16.7px;line-height:16.7px;color:#222;letter-spacing:0.567px;">0,00</div>
<div class="r" style="left:605px;top:562px;width:200px;height:44px;border:1.3px solid #dedede;border-radius:5px"></div>
<div class="t" style="left:618.50px;top:575.46px;font-size:16px;line-height:16px;color:#222;letter-spacing:-0.240px;transform:scaleX(0.9500);transform-origin:0 0;">R$</div>
<div class="t" style="left:753.10px;top:575.96px;font-size:16.7px;line-height:16.7px;color:#222;letter-spacing:0.633px;">0,00</div>
<div class="r" style="left:825px;top:562px;width:200px;height:44px;background:#f2f2f2;border-radius:5px"></div>
<div class="t" style="left:838.00px;top:575.56px;font-size:16px;line-height:16px;color:#777;letter-spacing:-0.240px;transform:scaleX(0.9698);transform-origin:0 0;">R$</div>
<div class="t" style="left:978.60px;top:575.56px;font-size:16px;line-height:16px;color:#777;letter-spacing:0.583px;">0,00</div>
<div class="r" style="left:1045px;top:562px;width:200px;height:44px;border:1.3px solid #dedede;border-radius:5px"></div>
<div class="t" style="left:1058.50px;top:575.56px;font-size:16px;line-height:16px;color:#222;letter-spacing:-0.240px;transform:scaleX(0.9451);transform-origin:0 0;">R$</div>
<div class="t" style="left:1187.70px;top:576.16px;font-size:16.7px;line-height:16.7px;color:#222;letter-spacing:-0.251px;transform:scaleX(0.9706);transform-origin:0 0;">19,90</div>
<div class="r" style="left:1265px;top:562px;width:200px;height:44px;background:#f2f2f2;border-radius:5px"></div>
<div class="t" style="left:1278.20px;top:575.56px;font-size:16px;line-height:16px;color:#777;letter-spacing:-0.240px;transform:scaleX(0.9599);transform-origin:0 0;">R$</div>
<div class="t" style="left:1404.30px;top:575.15px;font-size:14px;line-height:14px;color:#777;letter-spacing:1.067px;">****</div>
<svg class="r" style="left:1438px;top:575px;" width="19" height="16" viewBox="0 0 19 16"><path d="M0.8 7.3C3.5 3.9 6.3 2.4 9.5 2.4S15.5 3.9 18.2 7.3C15.5 10.7 12.7 12.1 9.5 12.1S3.5 10.7 0.8 7.3z" fill="none" stroke="#222" stroke-width="1.6"/><path d="M6.5 8.5A3 3 0 0 1 11.5 5.2z" fill="#222"/><path d="M8 10A3 3 0 0 0 12.5 6.8z" fill="#222"/><path d="M2.3 15.8L17.8 0.3" stroke="#f2f2f2" stroke-width="3.4"/><path d="M2.9 15.2L17.2 0.9" stroke="#222" stroke-width="1.7"/></svg>
<div class="r" style="left:1154px;top:675px;width:156px;height:50px;border:1.5px solid #222;border-radius:6px;background:#fff"></div>
<div class="t" style="left:1192.30px;top:690.22px;font-size:21px;line-height:21px;color:#222;letter-spacing:-0.315px;transform:scaleX(0.9628);transform-origin:0 0;">Cancelar</div>
<div class="r" style="left:1330px;top:675px;width:156px;height:50px;background:#a3f786;border-radius:6px"></div>
<div class="t" style="left:1366.80px;top:690.22px;font-size:21px;line-height:21px;color:#222;letter-spacing:-0.315px;transform:scaleX(0.9738);transform-origin:0 0;">Adicionar</div>
</body></html>
